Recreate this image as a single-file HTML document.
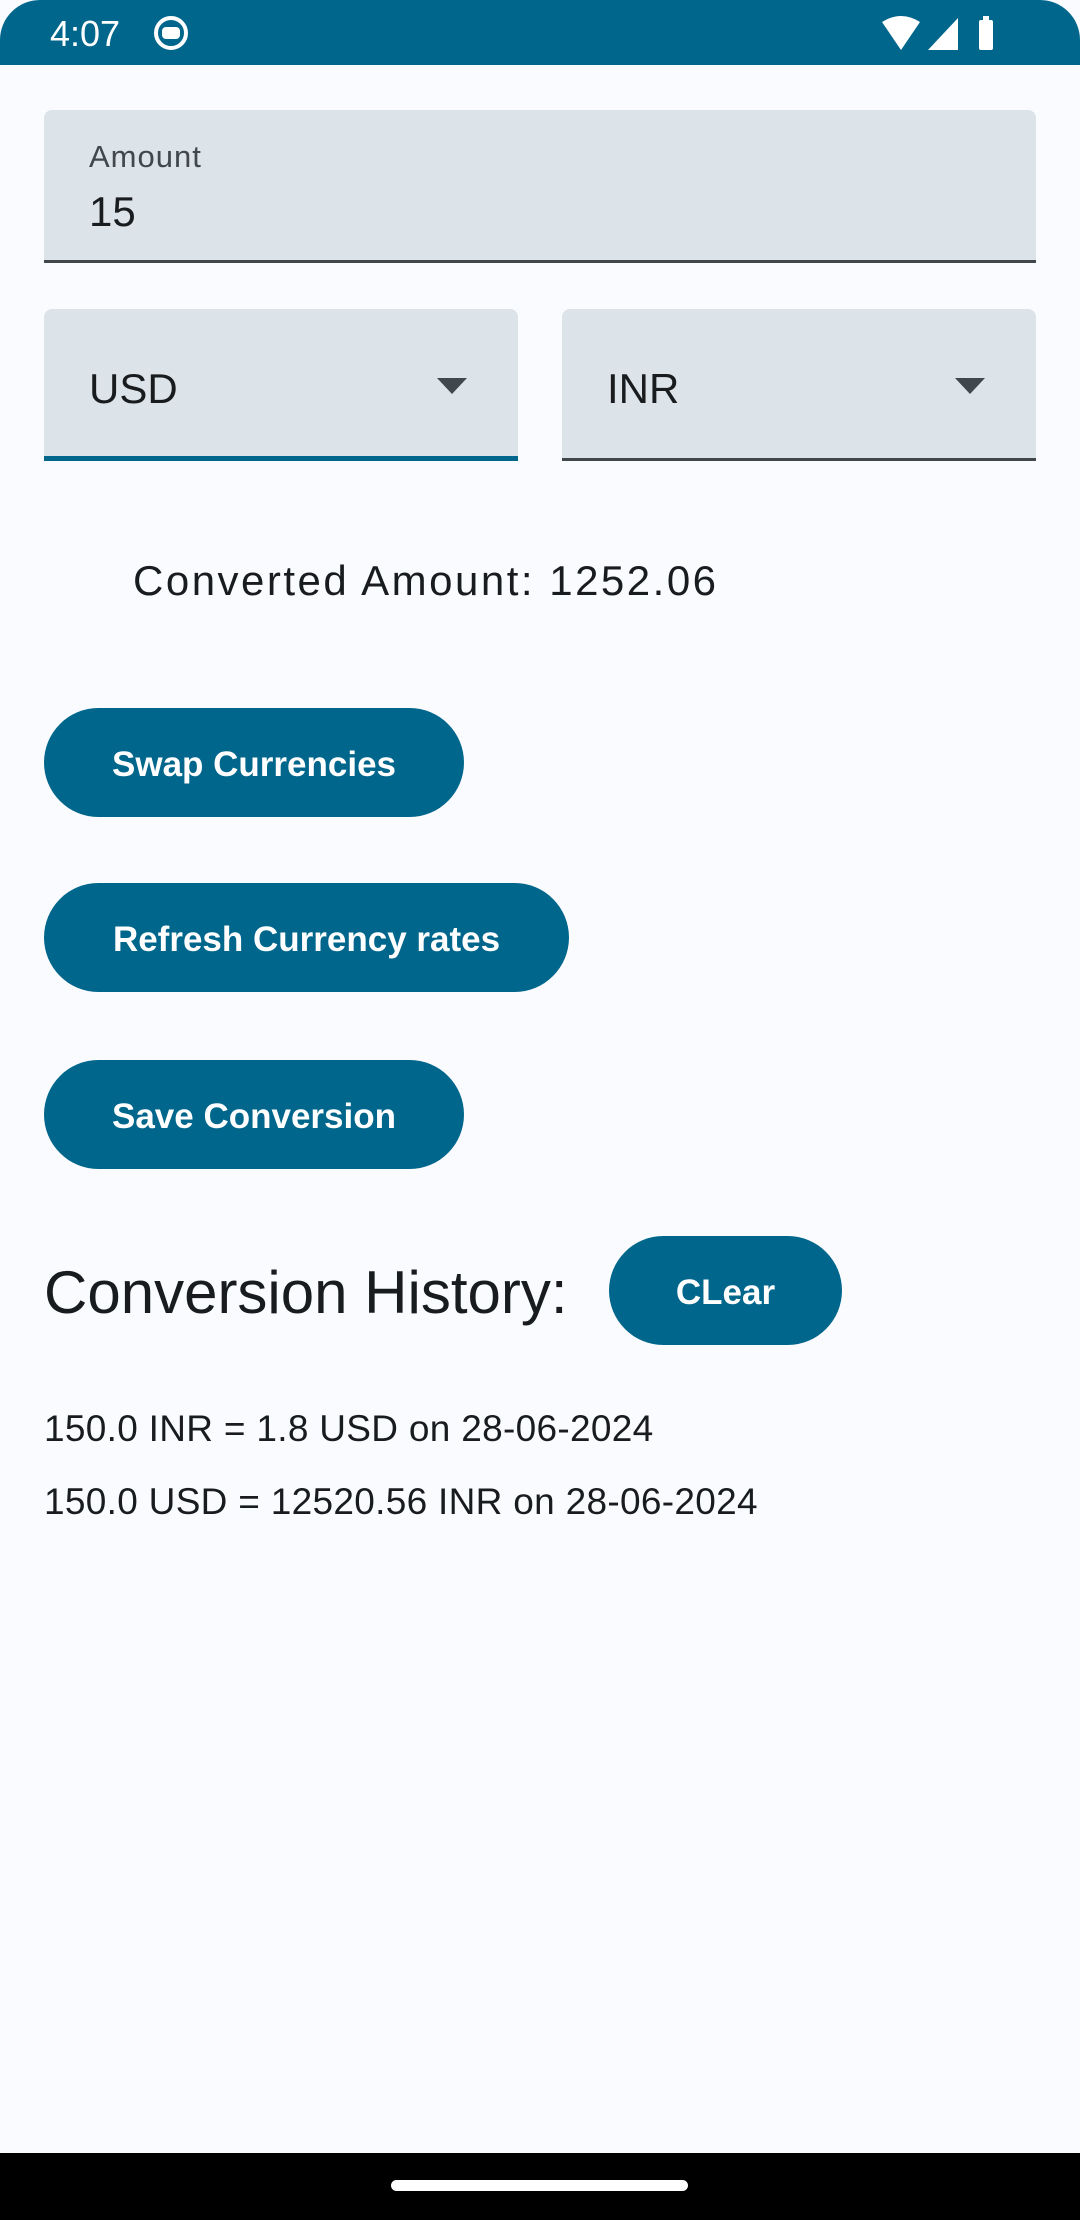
<!DOCTYPE html>
<html><head><meta charset="utf-8"><style>
*{margin:0;padding:0;box-sizing:border-box}
body{width:1080px;height:2220px;background:#FAFBFE;font-family:"Liberation Sans",sans-serif;position:relative;overflow:hidden;color:#191C1E}
.abs{position:absolute}
.sb{left:0;top:0;width:1080px;height:65px;background:#00668B;border-radius:40px 40px 0 0}
.field{background:#DCE3E9;border-radius:8px 8px 0 0}
.btn{background:#00668B;border-radius:60px;color:#fff;font-weight:bold;font-size:35px;display:flex;align-items:center;justify-content:center;height:109px;padding-top:4px}
.t{white-space:nowrap}
</style></head><body>
<div class="abs sb"></div>
<div class="abs t" style="left:50px;top:13px;color:#fff;font-size:36px">4:07</div>
<div class="abs" style="left:154px;top:16px;width:34px;height:34px;border:4px solid #fff;border-radius:50%;"><div style="margin:7px auto;width:18px;height:12px;background:#fff;border-radius:4px"></div></div>
<svg class="abs" style="left:880px;top:14px" width="120" height="40" viewBox="0 0 120 40">
<path d="M2 8 Q21 -4 40 8 L21 36 Z" fill="#fff"/>
<path d="M48 36 L78 4 L78 36 Z" fill="#fff"/>
<rect x="99" y="6" width="14" height="30" rx="2" fill="#fff"/><rect x="103" y="2" width="6" height="5" fill="#fff"/>
</svg>

<div class="abs field" style="left:44px;top:110px;width:992px;height:153px;border-bottom:3px solid #40484C"></div>
<div class="abs t" style="left:89px;top:139px;font-size:31px;letter-spacing:1px;color:#40484C">Amount</div>
<div class="abs t" style="left:89px;top:188px;font-size:42px">15</div>

<div class="abs field" style="left:44px;top:309px;width:474px;height:152px;border-bottom:5px solid #00668B"></div>
<div class="abs t" style="left:89px;top:365px;font-size:42px">USD</div>
<svg class="abs" style="left:437px;top:378px" width="30" height="16"><path d="M0 0 H30 L15 16Z" fill="#40484C"/></svg>

<div class="abs field" style="left:562px;top:309px;width:474px;height:152px;border-bottom:3px solid #40484C"></div>
<div class="abs t" style="left:607px;top:365px;font-size:42px">INR</div>
<svg class="abs" style="left:955px;top:378px" width="30" height="16"><path d="M0 0 H30 L15 16Z" fill="#40484C"/></svg>

<div class="abs t" style="left:133px;top:557px;font-size:42px;letter-spacing:2.5px">Converted Amount: 1252.06</div>

<div class="abs btn" style="left:44px;top:708px;width:420px">Swap Currencies</div>
<div class="abs btn" style="left:44px;top:883px;width:525px">Refresh Currency rates</div>
<div class="abs btn" style="left:44px;top:1060px;width:420px">Save Conversion</div>

<div class="abs t" style="left:44px;top:1258px;font-size:60px">Conversion History:</div>
<div class="abs btn" style="left:609px;top:1236px;width:233px">CLear</div>

<div class="abs t" style="left:44px;top:1408px;font-size:37px;letter-spacing:0.3px">150.0 INR = 1.8 USD on 28-06-2024</div>
<div class="abs t" style="left:44px;top:1481px;font-size:37px;letter-spacing:0.3px">150.0 USD = 12520.56 INR on 28-06-2024</div>

<div class="abs" style="left:0;top:2153px;width:1080px;height:67px;background:#000"></div>
<div class="abs" style="left:391px;top:2180px;width:297px;height:11px;background:#fff;border-radius:6px"></div>
</body></html>
